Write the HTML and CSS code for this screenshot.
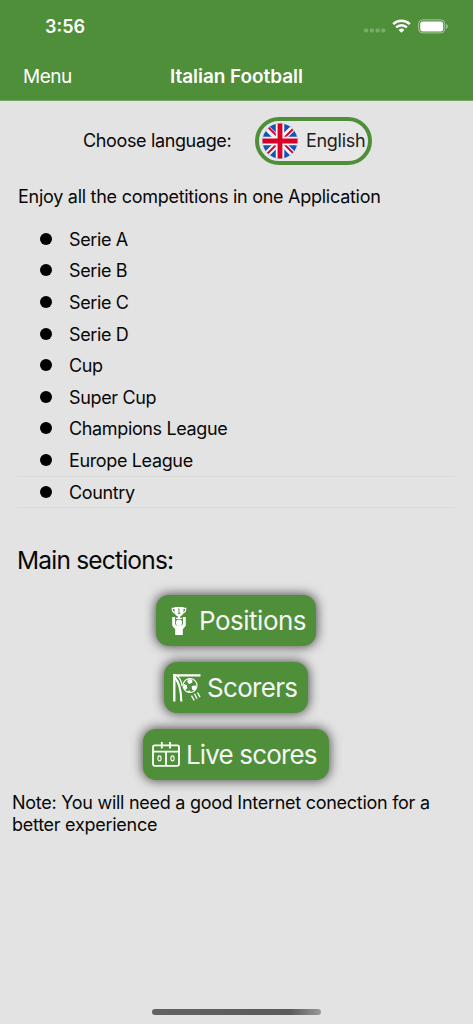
FILE: index.html
```html
<!DOCTYPE html>
<html lang="en">
<head>
<meta charset="utf-8">
<title>Italian Football</title>
<link rel="stylesheet" href="styles.css">
</head>
<body>
<div class="screen">
  <header class="header">
    <div class="status">
      <span class="time">3:56</span>
      <div class="indicators">
        <svg class="dots" width="22" height="5" viewBox="0 0 22 5" fill="#fff" opacity=".25"><rect x="0" y=".5" width="4.2" height="4" rx="1.4"/><rect x="5.8" y=".5" width="4.2" height="4" rx="1.4"/><rect x="11.5" y=".5" width="4.2" height="4" rx="1.4"/><rect x="17.2" y=".5" width="4.2" height="4" rx="1.4"/></svg>
        <svg class="wifi" width="19" height="14" viewBox="0 0 19 14" fill="none" stroke="#fff" stroke-width="2.5"><path d="M1.2 5.2a12 12 0 0 1 16.6 0"/><path d="M4.1 8.3a7.8 7.8 0 0 1 10.8 0"/><path d="M9.5 13.7l-2.8-2.8a4.1 4.1 0 0 1 5.600 0z" fill="#fff" stroke="none"/></svg>
        <svg class="battery" width="31" height="15" viewBox="0 0 31 15"><rect x=".6" y=".9" width="26.2" height="13" rx="4" fill="none" stroke="#fff" stroke-opacity=".5" stroke-width="1"/><rect x="2.2" y="2.4" width="23" height="10" rx="2.6" fill="#fff"/><path d="M28.2 5.1c2.2.8 2.2 4 0 4.8z" fill="#fff" opacity=".5"/></svg>
      </div>
    </div>
    <nav class="nav"><span class="menu">Menu</span><h1 class="title">Italian Football</h1></nav>
  </header>
  <main class="main">
    <div class="language">
      <span class="choose">Choose language:</span>
      <button class="picker">
        <svg class="flag" width="36" height="36" viewBox="0 0 36 36"><clipPath id="disc"><circle cx="18" cy="18" r="17.5"/></clipPath><g clip-path="url(#disc)"><path fill="#1455b4" d="M0 0h36v36H0z"/><path d="M0 0l36 36M36 0L0 36" stroke="#f4f4f8" stroke-width="6"/><path d="M5 3l10 10M34 3L22 15M2 34l12-12M22 21l12 12" stroke="#d80027" stroke-width="1.8"/><path d="M18 0v36M0 18h36" stroke="#f4f4f8" stroke-width="8.5"/><path d="M18 0v36M0 18h36" stroke="#d80027" stroke-width="4.8"/></g></svg>
        <span class="picked">English</span>
      </button>
    </div>
    <p class="intro">Enjoy all the competitions in one Application</p>
    <ul class="list">
      <li class="item">Serie A</li><li class="item">Serie B</li><li class="item">Serie C</li><li class="item">Serie D</li><li class="item">Cup</li><li class="item">Super Cup</li><li class="item">Champions League</li><li class="item">Europe League</li><li class="item ruled">Country</li>
    </ul>
    <h2 class="heading">Main sections:</h2>
    <div class="sections">
      <button class="section positions">
        <svg width="28" height="28" viewBox="0 0 28 28" fill="#fff"><path d="M9.500 0h9v4.500c0 3-1.600 4.200-3.300 4.800v1.500h1.700V12h-5.800v-1.200h1.700V9.300C11.100 8.700 9.500 7.500 9.500 4.500z"/><path d="M10 1.300H7.200c0 3 1 4.700 3.900 5M18 1.300h2.800c0 3-1 4.700-3.900 5" fill="none" stroke="#fff" stroke-width="1.200"/><path d="M13 2.400l1-.7v4.600M12.700 6.300h2.600" fill="none" stroke="#4f8f3a" stroke-width=".9"/><path d="M7.200 10h2.900v7.300l1.800 1.300h4.200l1.800-1.300V10h2.900v8.800l-3 3.400V28h-7.600v-5.800l-3-3.400z"/><circle cx="14" cy="15.700" r="3.100"/></svg>
        <span class="label">Positions</span>
      </button>
      <button class="section scorers">
        <svg width="28" height="28" viewBox="0 0 28 28" fill="none" stroke="#fff"><path d="M0 1.300h27.500M1.300 0v27.500" stroke-width="2.300"/><path d="M1.500 3C6 8 8.200 16 8.300 27.500" stroke-width="2.100"/><path d="M4 2c3 2 4.500 5 5 10" stroke-width="1.200"/><circle cx="17" cy="11.500" r="7" stroke-width="1.200"/><path fill="#fff" stroke="none" d="M15.200 5l4 .5.2 3-3.200 1.500-2-2zM11 10l2.800 1 .5 3.400-2.400 1.500-1.600-3zM18.600 12.300l3.700-1 1.300 2.200-2 3-2.500-.8zM14 16.900l3-.3 1 1.900h-3z"/><path d="M18.500 21.600l2.700 4.800M21.500 19.800l2.500 5M24.500 18.500l2.500 4.600" stroke-width="1.300"/></svg>
        <span class="label">Scorers</span>
      </button>
      <button class="section live">
        <svg width="28" height="28" viewBox="0 0 28 28" fill="none" stroke="#fff" stroke-width="1.800"><rect x="1" y="4.300" width="26" height="20.500" rx="1.800"/><path d="M1 10.700h26M14 10.700v14M9.800 1v6.400M18 1v6.400"/><ellipse cx="7.500" cy="17.400" rx="1.600" ry="2.500" stroke-width="1.100"/><ellipse cx="20.500" cy="17.400" rx="1.600" ry="2.500" stroke-width="1.100"/></svg>
        <span class="label">Live scores</span>
      </button>
    </div>
    <p class="note">Note: You will need a good Internet conection for a<br>better experience</p>
  </main>
  <div class="home-bar"></div>
</div>
</body>
</html>
```
FILE: styles.css
```css
* { box-sizing: border-box; }
body { margin: 0; background: #e3e3e3; font-family: Inter, "Liberation Sans", sans-serif; font-size: 18px; line-height: 22px; letter-spacing: -.27px; color: #080808; }
h1, h2, p, ul { margin: 0; padding: 0; font-weight: 400; }
button { font: inherit; letter-spacing: inherit; color: inherit; margin: 0; padding: 0; border: 0; white-space: nowrap; }
span, h1, h2, p { white-space: nowrap; }
svg { display: block; flex: none; }
.screen { width: 473px; height: 1024px; display: flex; flex-direction: column; overflow: hidden; }
.header { height: 101px; flex: none; background: #4f8f3a; color: #fff; border-bottom: 1px solid #79a66a; }
.status { height: 52px; padding: 0 25px 0 45px; display: flex; justify-content: space-between; align-items: center; }
.time { font-size: 18px; font-weight: 600; letter-spacing: 0; padding-top: 2px; }
.indicators { display: flex; align-items: center; }
.dots { margin: 9px 6px 0 0; }
.wifi { margin-right: 7px; }
.battery { margin-right: -1px; }
.nav { height: 48px; display: grid; grid-template-columns: 1fr auto 1fr; align-items: center; padding: 0 23px; }
.menu { font-size: 19px; letter-spacing: -.5px; padding-top: 1px; }
.title { font-size: 19px; font-weight: 600; letter-spacing: -.06px; padding-top: 1px; }
.main { flex: 1; }
.language { display: flex; align-items: center; padding: 16px 0 0 83px; gap: 24px; height: 64px; }
.choose { width: 148px; letter-spacing: -.36px; }
.picker { width: 117px; height: 48px; border: 4px solid #4f8f3a; border-radius: 24px; background: #e7e7e7; display: flex; align-items: center; gap: 8px; padding-left: 3px; color: #202020; letter-spacing: -.3px; }
.intro { padding: 21px 0 0 18px; }
.list { margin: 15px 18px 0 17px; list-style: none; letter-spacing: -.36px; }
.item { height: 31.600px; display: flex; align-items: center; gap: 17px; padding: 1px 0 0 23px; border-top: 1px solid transparent; }
.item::before { content: ""; width: 12px; height: 12px; border-radius: 50%; background: #000; margin-top: -2px; }
.ruled { height: 32.600px; border-top-color: #dadada; border-bottom: 1px solid #dadada; }
.heading { font-size: 24.500px; line-height: 30px; letter-spacing: -.8px; padding: 37px 0 0 17px; }
.sections { display: flex; flex-direction: column; align-items: center; gap: 16px; padding: 20px 1px 0 0; }
.section { height: 51px; border-radius: 13px; background: #4f8f3a; color: #f5f5f5; display: flex; align-items: center; gap: 6px; padding-left: 9px; font-size: 26px; box-shadow: 0 0 11px 1px rgba(0,0,0,.65); }
.positions { width: 160px; }
.scorers { width: 144px; }
.live { width: 186px; }
.label { font-weight: 400; letter-spacing: -.5px; padding-top: 1px; }
.scorers .label { letter-spacing: -.7px; }
.live .label { letter-spacing: -.85px; }
.note { padding: 12px 0 0 12px; }
.home-bar { width: 169px; height: 6px; margin: 0 auto 9px; border-radius: 3px; background: linear-gradient(90deg, #626262, #5b5b5b 82%, #999); }
```
